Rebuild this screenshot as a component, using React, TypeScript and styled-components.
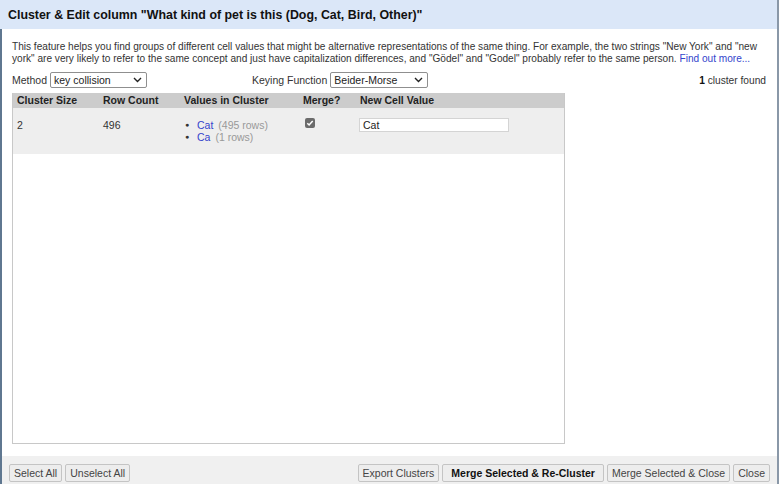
import React from "react";
import styled, { createGlobalStyle } from "styled-components";

const Global = createGlobalStyle`
  html, body { margin: 0; padding: 0; background: #fff; }
  body { font-family: "Liberation Sans", Arial, sans-serif; }
  * { box-sizing: border-box; }
`;

const Dialog = styled.div`
  width: 779px;
  height: 484px;
  display: flex;
  flex-direction: column;
  background: #fff;
  overflow: hidden;
`;

const Header = styled.div`
  height: 29px;
  flex: none;
  background: #dbe7f8;
  padding: 0 8px;
  display: flex;
  align-items: center;
  font-size: 12.4px;
  font-weight: bold;
  color: #111;
  border-right: 2px solid #8a98a8;
`;

const Frame = styled.div`
  flex: 1;
  display: flex;
  flex-direction: column;
  border-left: 2px solid #5f7790;
  border-right: 2px solid #8a98a8;
  min-height: 0;
`;

const Body = styled.div`
  flex: 1;
  padding: 12px 11px 12px 10px;
  display: flex;
  flex-direction: column;
  min-height: 0;
`;

const Description = styled.p`
  margin: 0;
  font-size: 10.1px;
  line-height: 12px;
  color: #333;
`;

const Link = styled.a`
  color: #3344cc;
  text-decoration: none;
`;

const Controls = styled.div`
  display: flex;
  align-items: center;
  margin-top: 6px;
  height: 18px;
  font-size: 10.5px;
  color: #333;
`;

const Field = styled.label<{ $width?: number }>`
  display: flex;
  align-items: center;
  gap: 3px;
  width: ${(p) => (p.$width ? `${p.$width}px` : "auto")};
`;

const Select = styled.div<{ $width: number }>`
  width: ${(p) => p.$width}px;
  height: 16px;
  border: 1px solid #8f8f8f;
  border-radius: 2px;
  background: #fff;
  display: flex;
  align-items: center;
  justify-content: space-between;
  padding: 0 4px 0 3px;
  font-size: 10.5px;
  color: #222;
`;

const Found = styled.div`
  margin-left: auto;
  font-size: 10.2px;
  b { font-weight: bold; color: #111; }
`;

const TableBox = styled.div`
  margin-top: 4px;
  width: 553px;
  flex: 1;
  border: 1px solid #c8c8c8;
  border-top: none;
  background: #fff;
`;

const Grid = styled.div`
  display: grid;
  grid-template-columns: 86px 81px 119px 57px 1fr;
  font-size: 10.5px;
`;

const HeadCell = styled.div`
  background: #cccccc;
  font-weight: bold;
  color: #222;
  height: 15px;
  padding: 1px 0 0 4px;
`;

const Cell = styled.div`
  background: #eeeeee;
  height: 46px;
  padding: 11px 0 0 4px;
  color: #333;
`;

const Values = styled.ul`
  margin: 0;
  padding: 0 0 0 1px;
  list-style: none;
  li {
    display: flex;
    align-items: center;
    line-height: 12px;
  }
`;

const Bullet = styled.span`
  width: 12px;
  font-size: 7px;
  color: #333;
`;

const ValueLink = styled.span`
  color: #3344cc;
  margin-right: 5px;
`;

const Count = styled.span`
  color: #999;
`;

const Check = styled.span`
  margin: -1px 0 0 2px;
  width: 10px;
  height: 10px;
  border-radius: 2px;
  background: #6b6b6b;
  display: flex;
  align-items: center;
  justify-content: center;
`;

const TextInput = styled.div`
  margin: -1px 0 0 -1px;
  width: 150px;
  height: 14px;
  border: 1px solid #d4d4d4;
  background: #fff;
  padding: 0 3px;
  line-height: 12px;
  color: #222;
`;

const Footer = styled.div`
  height: 28px;
  flex: none;
  background: #f0f0f0;
  display: flex;
  align-items: center;
  padding: 0 7px 0 7px;
  gap: 3px;
`;

const Button = styled.button<{ $primary?: boolean }>`
  height: 18px;
  padding: 0 ${(p) => (p.$primary ? 8 : 4)}px;
  border: 1px solid #c4c4c4;
  border-radius: 2px;
  background: #ededed;
  font-family: "Liberation Sans", Arial, sans-serif;
  font-size: 10.5px;
  font-weight: ${(p) => (p.$primary ? "bold" : "normal")};
  color: ${(p) => (p.$primary ? "#111" : "#444")};
  margin-top: 6px;
`;

const Spacer = styled.div`
  flex: 1;
`;

const Chevron = () => (
  <svg width="9" height="6" viewBox="0 0 9 6">
    <path d="M1 1l3.5 3.5L8 1" fill="none" stroke="#222" strokeWidth="1.4" />
  </svg>
);

export default function App() {
  return (
    <>
      <Global />
      <Dialog>
        <Header>Cluster &amp; Edit column "What kind of pet is this (Dog, Cat, Bird, Other)"</Header>
        <Frame>
          <Body>
            <Description>
              This feature helps you find groups of different cell values that might be alternative representations of the same thing. For example, the two strings "New York" and "new york" are very likely to refer to the same concept and just have capitalization differences, and "Gödel" and "Godel" probably refer to the same person. <Link>Find out more...</Link>
            </Description>
            <Controls>
              <Field $width={240}>
                Method
                <Select $width={97}>
                  key collision
                  <Chevron />
                </Select>
              </Field>
              <Field>
                Keying Function
                <Select $width={98}>
                  Beider-Morse
                  <Chevron />
                </Select>
              </Field>
              <Found>
                <b>1</b> cluster found
              </Found>
            </Controls>
            <TableBox>
              <Grid>
                <HeadCell>Cluster Size</HeadCell>
                <HeadCell>Row Count</HeadCell>
                <HeadCell>Values in Cluster</HeadCell>
                <HeadCell>Merge?</HeadCell>
                <HeadCell>New Cell Value</HeadCell>
                <Cell>2</Cell>
                <Cell>496</Cell>
                <Cell>
                  <Values>
                    <li>
                      <Bullet>●</Bullet>
                      <ValueLink>Cat</ValueLink>
                      <Count>(495 rows)</Count>
                    </li>
                    <li>
                      <Bullet>●</Bullet>
                      <ValueLink>Ca</ValueLink>
                      <Count>(1 rows)</Count>
                    </li>
                  </Values>
                </Cell>
                <Cell>
                  <Check>
                    <svg width="8" height="8" viewBox="0 0 8 8">
                      <path d="M1.3 4.2l1.8 1.8L6.7 2" fill="none" stroke="#fff" strokeWidth="1.5" />
                    </svg>
                  </Check>
                </Cell>
                <Cell>
                  <TextInput>Cat</TextInput>
                </Cell>
              </Grid>
            </TableBox>
          </Body>
          <Footer>
            <Button>Select All</Button>
            <Button>Unselect All</Button>
            <Spacer />
            <Button>Export Clusters</Button>
            <Button $primary>Merge Selected &amp; Re-Cluster</Button>
            <Button>Merge Selected &amp; Close</Button>
            <Button>Close</Button>
          </Footer>
        </Frame>
      </Dialog>
    </>
  );
}
